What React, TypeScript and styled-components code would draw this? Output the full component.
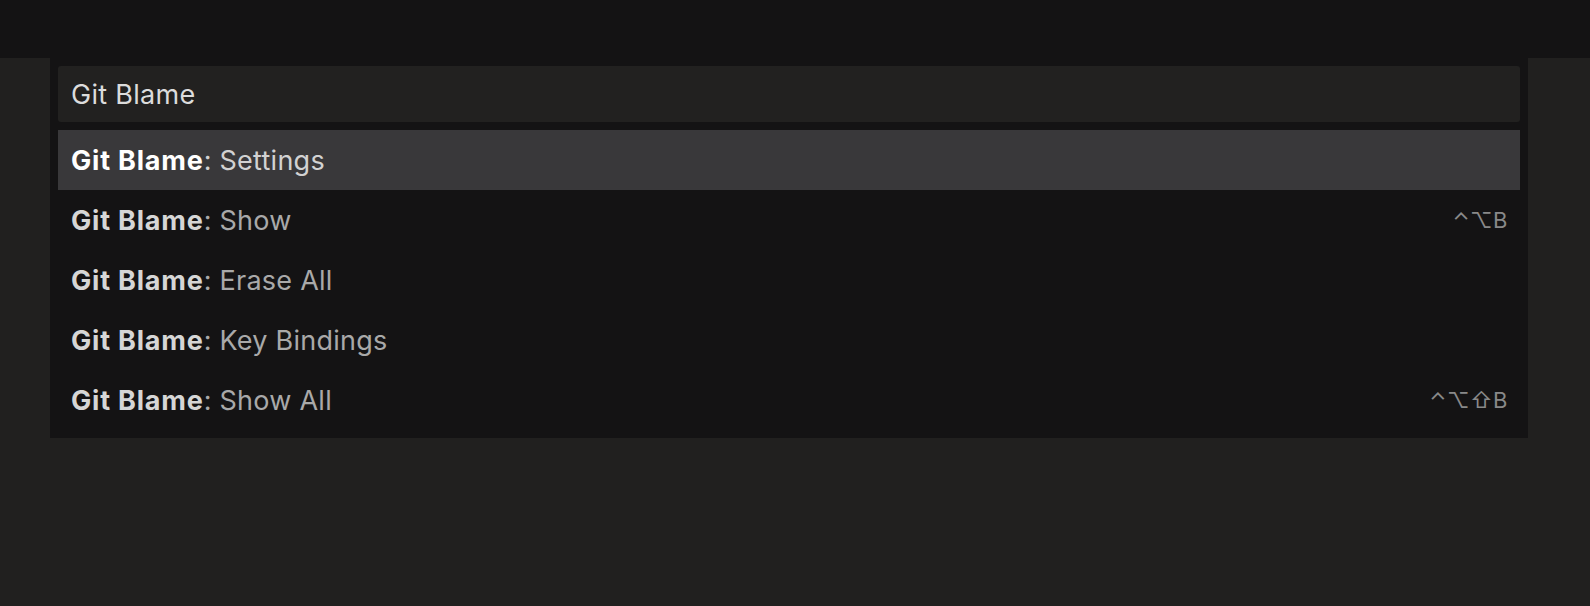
import React, { FC } from 'react';
import styled, { createGlobalStyle } from 'styled-components';

const GlobalStyle = createGlobalStyle`
  html, body {
    margin: 0;
    padding: 0;
    background: #21201f;
    font-family: Inter, "DejaVu Sans", sans-serif;
  }
`;

const Page = styled.div`
  min-height: 606px;
  background: #21201f;
`;

const TitleBar = styled.div`
  height: 58px;
  background: #141314;
`;

const QuickPick = styled.div`
  margin-left: 50px;
  width: 1478px;
  box-sizing: border-box;
  padding: 8px;
  background: #141314;
  display: flex;
  flex-direction: column;
  gap: 8px;
`;

const Input = styled.div`
  height: 56px;
  display: flex;
  align-items: center;
  padding: 0 13px;
  border-radius: 3px;
  background: #222120;
  color: #dcdcdc;
  font-size: 27px;
  letter-spacing: 0.3px;
`;

const List = styled.div`
  display: flex;
  flex-direction: column;
`;

const Row = styled.div<{ $active?: boolean }>`
  height: 60px;
  display: flex;
  align-items: center;
  justify-content: space-between;
  padding: 0 13px;
  background: ${(p) => (p.$active ? '#39383a' : 'transparent')};
  font-size: 27px;
  letter-spacing: 0.25px;
  color: ${(p) => (p.$active ? '#d2d2d2' : '#a9a9a9')};
`;

const Category = styled.span<{ $active?: boolean }>`
  font-weight: 700;
  letter-spacing: 0.8px;
  color: ${(p) => (p.$active ? '#ffffff' : '#d6d6d6')};
`;

const Keys = styled.span`
  font-size: 22px;
  color: #898989;
  letter-spacing: 0.5px;
  margin-right: -1px;
`;

const items = [
  { label: 'Settings', keys: '' },
  { label: 'Show', keys: '⌃⌥B' },
  { label: 'Erase All', keys: '' },
  { label: 'Key Bindings', keys: '' },
  { label: 'Show All', keys: '⌃⌥⇧B' },
];

const App: FC = () => {
  return (
    <Page>
      <GlobalStyle />
      <TitleBar />
      <QuickPick>
        <Input>Git Blame</Input>
        <List>
          {items.map((item, i) => (
            <Row key={item.label} $active={i === 0}>
              <span>
                <Category $active={i === 0}>Git Blame</Category>: {item.label}
              </span>
              {item.keys && <Keys>{item.keys}</Keys>}
            </Row>
          ))}
        </List>
      </QuickPick>
    </Page>
  );
};

export default App;
